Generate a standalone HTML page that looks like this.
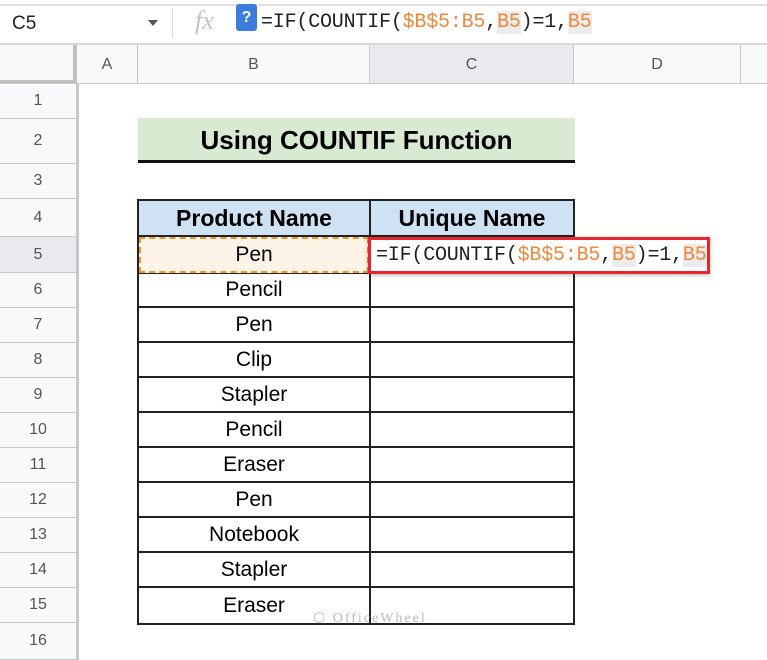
<!DOCTYPE html>
<html><head><style>
*{margin:0;padding:0;box-sizing:border-box}
body{width:767px;height:660px;background:#fff;position:relative;overflow:hidden;font-family:"Liberation Sans",Arial,sans-serif}
.a{position:absolute}
.rh{position:absolute;left:0;width:76px;background:#f8f9fa;border-bottom:1px solid #c8c8c8;color:#555;font-size:16px;display:flex;align-items:center;justify-content:center}
.ch{position:absolute;top:45px;height:39px;border-right:1px solid #c8c8c8;background:#f8f9fa;color:#555;font-size:16px;display:flex;align-items:center;justify-content:center}
.cell{position:absolute;left:138px;width:232px;display:flex;align-items:center;justify-content:center;font-size:21px;color:#000;border-bottom:2px solid #222}
.ln{position:absolute;left:371px;width:202px;height:2px;background:#222}
.mono{font-family:"Liberation Mono",monospace}
.o{color:#f0883c}
.hl{background:#ececec}
</style></head><body>
<div class="a" style="left:0;top:4px;width:767px;height:2px;background:#e0e0e0"></div>
<div class="a" style="left:12px;top:13px;font-size:19px;color:#222">C5</div>
<div class="a" style="left:148px;top:20px;width:0;height:0;border-left:5px solid transparent;border-right:5px solid transparent;border-top:6px solid #555"></div>
<div class="a" style="left:172px;top:8px;width:1px;height:30px;background:#ddd"></div>
<div class="a" style="left:195px;top:6px;font-family:'Liberation Serif',serif;font-style:italic;font-size:26px;color:#c4c4c4">fx</div>
<div class="a" style="left:236px;top:4px;width:21px;height:27px;background:#3b7ddd;border-radius:3px;color:#fff;font-weight:bold;font-size:16px;text-align:center;line-height:27px">?</div>
<div class="a mono" style="left:261px;top:11px;font-size:20px;color:#222;letter-spacing:-0.2px">=IF(COUNTIF(<span class="o">$B$5:B5</span>,<span class="o hl">B5</span>)=1,<span class="o hl">B5</span></div>
<div class="a" style="left:0;top:43px;width:767px;height:2px;background:#d8d8d8"></div>
<div class="ch" style="left:0;width:77px;border-right:4px solid #c0c0c0;border-bottom:4px solid #c0c0c0"></div>
<div class="ch" style="left:77px;width:61px">A</div>
<div class="ch" style="left:138px;width:232px">B</div>
<div class="ch" style="left:370px;width:204px;background:#e8eaed">C</div>
<div class="ch" style="left:574px;width:167px">D</div>
<div class="ch" style="left:741px;width:30px"></div>
<div class="a" style="left:0;top:83px;width:767px;height:1px;background:#c8c8c8"></div>
<div class="a" style="left:76px;top:84px;width:3px;height:576px;background:#c8c8c8"></div>
<div class="rh" style="top:84px;height:35px">1</div>
<div class="rh" style="top:119px;height:45px">2</div>
<div class="rh" style="top:164px;height:35px">3</div>
<div class="rh" style="top:199px;height:38px">4</div>
<div class="rh" style="top:237px;height:36px;background:#e8eaed">5</div>
<div class="rh" style="top:273px;height:35px">6</div>
<div class="rh" style="top:308px;height:35px">7</div>
<div class="rh" style="top:343px;height:35px">8</div>
<div class="rh" style="top:378px;height:35px">9</div>
<div class="rh" style="top:413px;height:35px">10</div>
<div class="rh" style="top:448px;height:35px">11</div>
<div class="rh" style="top:483px;height:35px">12</div>
<div class="rh" style="top:518px;height:35px">13</div>
<div class="rh" style="top:553px;height:35px">14</div>
<div class="rh" style="top:588px;height:35px">15</div>
<div class="rh" style="top:623px;height:37px">16</div>
<div class="a" style="left:138px;top:118px;width:437px;height:45px;background:#d9ead3;border-bottom:3px solid #111;font-weight:bold;font-size:26px;display:flex;align-items:center;justify-content:center;padding-top:3px">Using COUNTIF Function</div>
<div class="a" style="left:137px;top:199px;width:438px;height:426px;border:2px solid #222"></div>
<div class="a" style="left:369px;top:199px;width:2px;height:426px;background:#222"></div>
<div class="a" style="left:139px;top:201px;width:230px;height:36px;background:#cfe2f3;border-bottom:2px solid #222;font-weight:bold;font-size:23px;display:flex;align-items:center;justify-content:center">Product Name</div>
<div class="a" style="left:371px;top:201px;width:202px;height:36px;background:#cfe2f3;border-bottom:2px solid #222;font-weight:bold;font-size:23px;display:flex;align-items:center;justify-content:center">Unique Name</div>
<div class="a" style="left:139px;top:237px;width:230px;height:36px;background:#fdf3e7;border:2px dashed #f0962a;font-size:21px;display:flex;align-items:center;justify-content:center">Pen</div>
<div class="cell" style="top:273px;height:35px;border-top:1px solid #222">Pencil</div>
<div class="cell" style="top:308px;height:35px">Pen</div>
<div class="cell" style="top:343px;height:35px">Clip</div>
<div class="cell" style="top:378px;height:35px">Stapler</div>
<div class="cell" style="top:413px;height:35px">Pencil</div>
<div class="cell" style="top:448px;height:35px">Eraser</div>
<div class="cell" style="top:483px;height:35px">Pen</div>
<div class="cell" style="top:518px;height:35px">Notebook</div>
<div class="cell" style="top:553px;height:35px">Stapler</div>
<div class="cell" style="top:588px;height:35px;border-bottom:none">Eraser</div>
<div class="ln" style="top:271px"></div>
<div class="ln" style="top:306px"></div>
<div class="ln" style="top:341px"></div>
<div class="ln" style="top:376px"></div>
<div class="ln" style="top:411px"></div>
<div class="ln" style="top:446px"></div>
<div class="ln" style="top:481px"></div>
<div class="ln" style="top:516px"></div>
<div class="ln" style="top:551px"></div>
<div class="ln" style="top:586px"></div>
<div class="a mono" style="left:368px;top:237px;width:342px;height:37px;background:#fff;border:3px solid #e8262e;box-shadow:0 1px 4px rgba(0,0,0,.3);font-size:20px;color:#222;letter-spacing:-0.2px;padding-left:5px;line-height:31px;white-space:nowrap;overflow:hidden">=IF(COUNTIF(<span class="o">$B$5:B5</span>,<span class="o hl">B5</span>)=1,<span class="o hl">B5</span></div>
<div class="a" style="left:313px;top:610px;font-family:'Liberation Serif',serif;font-size:14px;color:#b8bcc4;letter-spacing:2px">⬡ OfficeWheel</div>
</body></html>
